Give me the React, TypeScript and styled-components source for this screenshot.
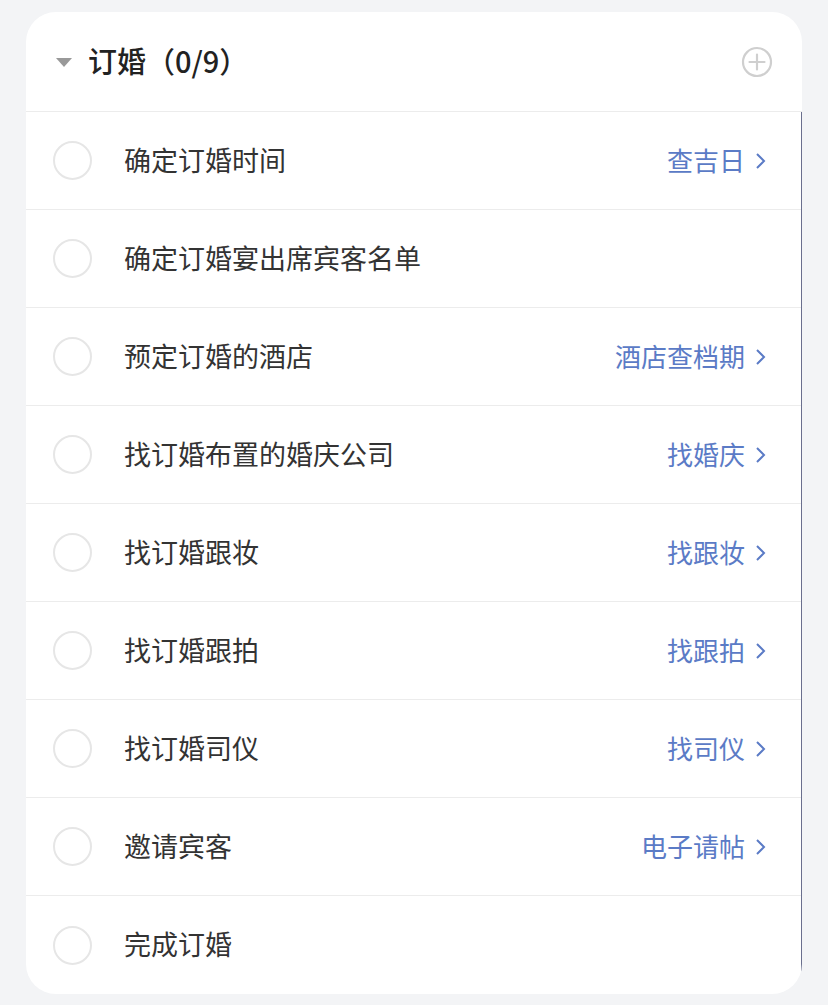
import React from "react";
import styled, { createGlobalStyle } from "styled-components";

const Global = createGlobalStyle`
  html, body { margin: 0; padding: 0; background: #f3f4f6; }
  body { font-family: "Noto Sans CJK SC", "Noto Sans", sans-serif; }
`;

const Page = styled.div`
  padding: 12px 26px 10px 26px;
  width: 828px;
  box-sizing: border-box;
`;

const Card = styled.div`
  background: #fff;
  border-radius: 30px;
  overflow: hidden;
  width: 776px;
`;

const Header = styled.div`
  height: 99px;
  display: flex;
  align-items: center;
  padding: 0 29px 0 30px;
  border-bottom: 1px solid #ececec;
`;

const Caret = styled.span`
  width: 0;
  height: 0;
  border-left: 8px solid transparent;
  border-right: 8px solid transparent;
  border-top: 9px solid #999;
  margin-right: 16px;
  margin-top: 2px;
`;

const Title = styled.h2`
  margin: 0;
  font-size: 29px;
  font-weight: 500;
  color: #222;
  flex: 1;
  line-height: 1;
  margin-top: -2px;
`;

const AddButton = styled.span`
  display: flex;
  width: 32px;
  height: 32px;
`;

const List = styled.div`
  border-right: 1px solid #6a6f8e;
`;

const Row = styled.div`
  height: 97px;
  display: flex;
  align-items: center;
  padding: 0 34px 0 27px;
  border-bottom: 1px solid #ececec;
  &:last-child { border-bottom: none; height: 98px; }
`;

const Check = styled.span`
  width: 35px;
  height: 35px;
  border-radius: 50%;
  border: 2px solid #e6e6e6;
  flex-shrink: 0;
`;

const Label = styled.span`
  margin-left: 32px;
  font-size: 27px;
  color: #333;
  flex: 1;
  margin-top: -3px;
`;

const Link = styled.span`
  display: flex;
  align-items: center;
  font-size: 26px;
  color: #5b7bc6;
  margin-top: -3px;
`;

const Chevron = styled.svg`
  margin-left: 10px;
  width: 12px;
  height: 18px;
  margin-top: 3px;
`;

const items: { label: string; link?: string }[] = [
  { label: "确定订婚时间", link: "查吉日" },
  { label: "确定订婚宴出席宾客名单" },
  { label: "预定订婚的酒店", link: "酒店查档期" },
  { label: "找订婚布置的婚庆公司", link: "找婚庆" },
  { label: "找订婚跟妆", link: "找跟妆" },
  { label: "找订婚跟拍", link: "找跟拍" },
  { label: "找订婚司仪", link: "找司仪" },
  { label: "邀请宾客", link: "电子请帖" },
  { label: "完成订婚" },
];

export default function App() {
  return (
    <>
      <Global />
      <Page>
        <Card>
          <Header>
            <Caret />
            <Title>订婚（0/9）</Title>
            <AddButton>
              <svg width="32" height="32" viewBox="0 0 32 32">
                <circle cx="16" cy="16" r="14" fill="none" stroke="#cfcfcf" strokeWidth="2.2" />
                <path d="M16 8.5v15M8.5 16h15" stroke="#cfcfcf" strokeWidth="2.2" strokeLinecap="round" />
              </svg>
            </AddButton>
          </Header>
          <List>
            {items.map((it) => (
              <Row key={it.label}>
                <Check />
                <Label>{it.label}</Label>
                {it.link && (
                  <Link>
                    {it.link}
                    <Chevron viewBox="0 0 12 18">
                      <path d="M2 2l7 7-7 7" fill="none" stroke="#5b7bc6" strokeWidth="2" />
                    </Chevron>
                  </Link>
                )}
              </Row>
            ))}
          </List>
        </Card>
      </Page>
    </>
  );
}
